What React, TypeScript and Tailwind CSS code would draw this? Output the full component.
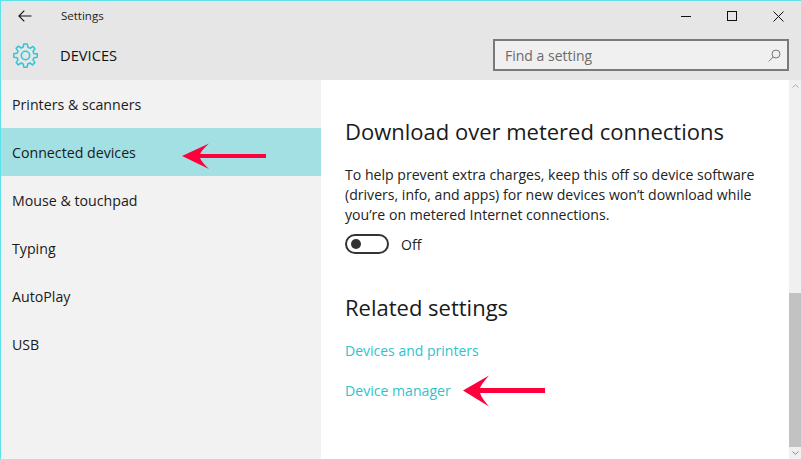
import React from "react";

function SmallArrow({ className }: { className: string }) {
  return (
    <svg className={className} width="86" height="27" viewBox="0 0 86 27">
      <path d="M0 13 L27 0.5 Q19.5 7.5 18 11 L84 11 L84 15 L18 15 Q19.5 19 27 26 Z" fill="#ff003c" />
    </svg>
  );
}

function LargeArrow({ className }: { className: string }) {
  return (
    <svg className={className} width="84" height="32" viewBox="0 0 84 32">
      <path d="M0 15.5 L26 0.5 Q18.5 9 17 13 L82 13 L82 18 L17 18 Q18.5 23 26 31.5 Z" fill="#ff003c" />
    </svg>
  );
}

const items = ["Printers & scanners", "Connected devices", "Mouse & touchpad", "Typing", "AutoPlay", "USB"];

export default function App() {
  return (
    <div className="w-[801px] h-[459px] flex flex-col overflow-hidden bg-white border-t border-l border-[#5fe3ea] relative font-['Open_Sans']">
      <header className="h-[79px] bg-[#e6e6e6] flex flex-col shrink-0">
        <div className="h-[30px] flex items-center">
          <svg className="ml-[17px]" width="14" height="12" viewBox="0 0 14 12" fill="none" stroke="#111" strokeWidth="1.1">
            <path d="M13.5 6 H1 M6.3 .6 L.9 6 L6.3 11.4" />
          </svg>
          <span className="ml-[29px] text-[11.5px] text-[#222]">Settings</span>
          <div className="ml-auto flex items-center">
            <span className="w-[10px] h-px bg-[#111] mr-[36px]" />
            <span className="w-[10px] h-[10px] border border-[#111] mr-[36px]" />
            <svg className="mr-[17px]" width="11" height="11" viewBox="0 0 11 11" stroke="#111" strokeWidth="1" fill="none">
              <path d="M.5 .5 L10.5 10.5 M10.5 .5 L.5 10.5" />
            </svg>
          </div>
        </div>
        <div className="flex-1 flex items-center pb-[1px]">
          <svg className="ml-[12px]" width="25" height="25" viewBox="0 0 24 24" fill="none" stroke="#2fc9d6" strokeWidth="1.5" strokeLinejoin="round">
            <circle cx="12" cy="12" r="4" />
            <path d="M10.3 1 H13.7 L14.4 4.2 L16.4 5 L19.2 3.3 L21 5.5 L19.2 8.1 L20.1 10.2 L23.3 10.4 V13.6 L20.1 14.2 L19.2 16.2 L21 18.8 L18.8 21 L16.2 19.2 L14.2 20.1 L13.6 23.2 H10.4 L9.8 20.1 L7.8 19.2 L5.1 21 L3 18.8 L4.8 16.2 L3.9 14.2 L.7 13.6 V10.4 L3.9 9.8 L4.8 7.8 L3 5.2 L5.2 3 L7.8 4.8 L9.8 3.9 Z" />
          </svg>
          <span className="ml-[22px] text-[14.7px] font-medium text-[#111]">DEVICES</span>
          <div className="ml-auto mr-[12px] w-[296px] h-[32px] border-2 border-[#7a7a7a] bg-[#f0f0f0] flex items-center pl-[10px] pr-[6px]">
            <span className="text-[14px] text-[#6b6b6b]">Find a setting</span>
            <svg className="ml-auto" width="13" height="13" viewBox="0 0 13 13" fill="none" stroke="#777" strokeWidth="1">
              <circle cx="8" cy="5" r="4" />
              <path d="M5.2 8 L.8 12.4" />
            </svg>
          </div>
        </div>
      </header>

      <div className="flex-1 flex min-h-0">
        <nav className="w-[320px] bg-[#f2f2f2] shrink-0">
          {items.map((t) => (
            <div
              key={t}
              className={`h-[48px] pl-[11px] pt-[1px] flex items-center text-[14.2px] text-[#1a1a1a] ${t === "Connected devices" ? "bg-[#a2e0e4]" : ""}`}
            >
              {t}
            </div>
          ))}
        </nav>

        <main className="flex-1 pl-[24px] pt-[35px] text-[#222]">
          <h2 className="text-[22px] leading-[32px] text-[#1a1a1a]">Download over metered connections</h2>
          <p className="mt-[18px] w-[425px] text-[14.1px] leading-[20px]">
            To help prevent extra charges, keep this off so device software (drivers, info, and apps) for new devices won’t download while you’re on metered Internet connections.
          </p>
          <div className="mt-[9px] flex items-center h-[20px]">
            <span className="w-[44px] h-[20px] rounded-full border-2 border-[#333] flex items-center pl-[4px]">
              <span className="w-[10px] h-[10px] rounded-full bg-[#333]" />
            </span>
            <span className="ml-[12px] text-[14px]">Off</span>
          </div>
          <h2 className="mt-[37px] text-[22px] leading-[32px] text-[#1a1a1a]">Related settings</h2>
          <a className="block mt-[18px] text-[14px] leading-[20px] text-[#2fc3cd]">Devices and printers</a>
          <a className="block mt-[20px] text-[14.1px] leading-[20px] text-[#2fc3cd]">Device manager</a>
        </main>

        <div className="w-[12px] shrink-0 bg-[#f0f0f0] flex flex-col">
          <div className="h-[12px] flex items-center justify-center">
            <svg width="7" height="4" viewBox="0 0 7 4" fill="none" stroke="#aaa"><path d="M.5 3.5 L3.5 .7 L6.5 3.5" /></svg>
          </div>
          <div className="h-[201px]" />
          <div className="flex-1 bg-[#c2c2c2]" />
          <div className="h-[12px] flex items-center justify-center">
            <svg width="7" height="4" viewBox="0 0 7 4" fill="none" stroke="#888"><path d="M.5 .5 L3.5 3.3 L6.5 .5" /></svg>
          </div>
        </div>
      </div>

      <SmallArrow className="absolute left-[181px] top-[142px]" />
      <LargeArrow className="absolute left-[462px] top-[374px]" />
    </div>
  );
}
